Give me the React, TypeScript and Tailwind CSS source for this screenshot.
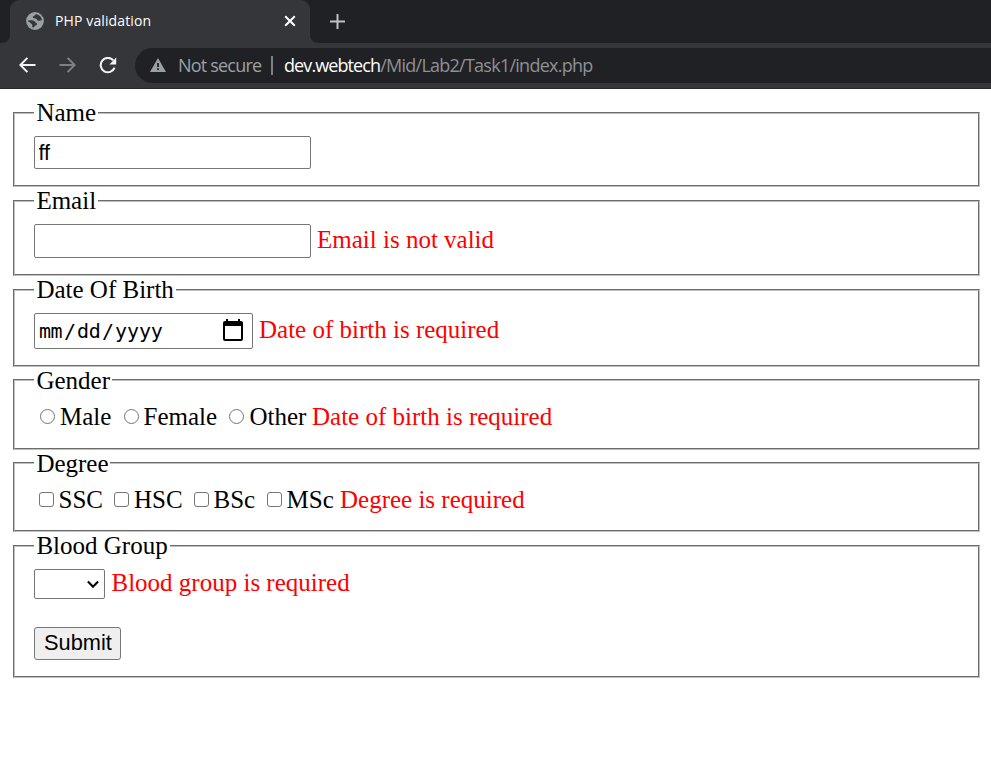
import type { ReactNode } from "react";

function TabStrip() {
  return (
    <div className="flex h-[43px] bg-[#35363a]">
      <div className="w-[10px] rounded-br-[8px] bg-[#202124]" />
      <div className="w-[300px] bg-[#202124]">
        <div className="flex h-[43px] items-center rounded-t-[9px] bg-[#35363a] pb-px pl-4 pr-[14px]">
          <svg width="18" height="18" viewBox="0 0 18 18" className="shrink-0">
            <circle cx="9" cy="9" r="8.9" fill="#9aa0a6" />
            <path
              d="M10.2 2.2C8.8 2.4 8.9 3.9 7.8 4.1C6.6 4.4 6.6 5.6 7.4 6.1C8.6 6.9 10.4 6.2 10.9 7.4C11.4 8.8 13.2 9.2 14.2 8.6L15.9 8.2C15.7 5.1 13.4 2.6 10.2 2.2Z"
              fill="#35363a"
            />
            <path
              d="M2.1 8.6C3.6 8.2 6.8 8 8.2 8.9C9.3 9.5 9.2 10.6 10.3 10.9C11.5 11.2 11.4 12.7 10.2 13C8.9 13.3 9 14.6 7.5 15.6L6.2 15.2L6.3 12.9C6.2 11.6 4.5 11.8 4.2 10.7C3.9 9.8 2.8 9.8 2.1 9.7Z"
              fill="#35363a"
            />
          </svg>
          <span className="ml-[11px] w-[97px] whitespace-nowrap font-['Open_Sans',sans-serif] text-[14px] leading-5 tracking-[0.12px] text-white">
            PHP validation
          </span>
          <svg width="12" height="12" viewBox="0 0 12 12" className="ml-auto" fill="none" stroke="#fff" strokeWidth="2">
            <path d="M1.2 1.2 10.8 10.8M10.8 1.2 1.2 10.8" />
          </svg>
        </div>
      </div>
      <div className="flex flex-1 items-center rounded-bl-[8px] bg-[#202124] pb-px pl-5">
        <svg width="15" height="15" viewBox="0 0 15 15" fill="none" stroke="#bdc1c6" strokeWidth="2">
          <path d="M7.5 0v15M0 7.5h15" />
        </svg>
      </div>
    </div>
  );
}

function Toolbar() {
  return (
    <div className="flex h-[46px] items-center border-b border-[#292a2d] bg-[#35363a] pb-px pl-[19px]">
      <svg width="17" height="16" viewBox="0 0 17 16" fill="none" stroke="#f1f3f4" strokeWidth="2">
        <path d="M16.5 8H1.6M8.4.9 1.4 8l7 7.1" />
      </svg>
      <svg width="17" height="16" viewBox="0 0 17 16" fill="none" stroke="#7f8083" strokeWidth="2" className="ml-[23px]">
        <path d="M.5 8h14.9M8.6.9l7 7.1-7 7.1" />
      </svg>
      <svg width="18" height="17" viewBox="0 0 18 17" fill="none" className="ml-[23px]">
        <path d="M14.2 3.2A7.2 7.2 0 1 0 15.6 10.7" stroke="#f1f3f4" strokeWidth="2.1" />
        <path d="M17.2.6V7.4H10.4Z" fill="#f1f3f4" />
      </svg>
      <div className="ml-[18px] flex h-[35px] flex-1 items-center rounded-l-full bg-[#202124] pl-[15px] font-['Open_Sans',sans-serif] text-[18px]">
        <svg width="16" height="14" viewBox="0 0 16 14">
          <path d="M8 0 16 14H0Z" fill="#9aa0a6" />
          <path d="M7.1 5h1.8v4H7.1zM7.1 10.3h1.8v1.8H7.1z" fill="#202124" />
        </svg>
        <span className="ml-3 w-[84px] whitespace-nowrap tracking-[-0.8px] text-[#9aa0a6]">Not secure</span>
        <span className="ml-[9px] h-[19px] w-[2px] bg-[#7d8084]" />
        <span className="ml-[11px] whitespace-nowrap text-[#8d9196]">
          <span className="tracking-[-0.9px] text-white">dev.webtech</span>
          <span className="tracking-[-0.75px]">/Mid/Lab2/Task1/index.php</span>
        </span>
      </div>
    </div>
  );
}

type GroupProps = { title: string; size: string; legend?: string; children: ReactNode };

function Group({ title, size, legend = "h-[28px] leading-[28px]", children }: GroupProps) {
  return (
    <fieldset className={`border-2 border-[#c0c0c0] [border-style:groove] pl-[19px] ${size}`}>
      <legend className={`whitespace-nowrap pl-[2.4px] pr-[1.9px] ${legend}`}>{title}</legend>
      {children}
    </fieldset>
  );
}

function ErrorText({ children }: { children: ReactNode }) {
  return <span className="ml-[6px] whitespace-nowrap text-[#ff0000]">{children}</span>;
}

const field = "rounded-[2px] border border-[#767676] bg-white";

export default function App() {
  return (
    <div className="min-h-[783px] w-[991px] overflow-hidden bg-white">
      <TabStrip />
      <Toolbar />
      <form className="ml-[13px] mt-[10px] w-[967px] font-['Liberation_Serif',serif] text-[25px] leading-[28px] text-black">
        <Group title="Name" size="h-[88px]">
          <div className="flex pt-[9px]">
            <input
              type="text"
              defaultValue="ff"
              className={`h-[33px] w-[277px] pl-[3.5px] pt-[2px] font-['Liberation_Sans',sans-serif] text-[21.5px] ${field}`}
            />
          </div>
        </Group>
        <Group title="Email" size="h-[89px]">
          <div className="flex pt-[9px]">
            <input type="text" className={`h-[34px] w-[277px] ${field}`} />
            <span className="pt-[2px]"><ErrorText>Email is not valid</ErrorText></span>
          </div>
        </Group>
        <Group title="Date Of Birth" size="h-[91px]">
          <div className="flex pt-[9px]">
            <div className={`flex h-[36px] w-[219px] items-center pl-[4px] pr-[9px] font-['DejaVu_Sans_Mono',monospace] text-[20px] ${field}`}>
              <span className="w-[25px] tracking-[-0.5px]">mm</span>
              <span className="w-[13px]">/</span>
              <span className="w-[25px] tracking-[-0.2px]">dd</span>
              <span className="w-[13px]">/</span>
              <span className="tracking-[-0.1px]">yyyy</span>
              <svg width="20" height="22" viewBox="0 0 20 22" className="mb-[2px] ml-auto">
                <path d="M3 0h2v2h10V0h2v2h1q2 0 2 2v16q0 2-2 2H2q-2 0-2-2V4q0-2 2-2h1zM2 7v13h16V7z" fill="#000" fillRule="evenodd" />
              </svg>
            </div>
            <span className="pt-[3px]"><ErrorText>Date of birth is required</ErrorText></span>
          </div>
        </Group>
        <Group title="Gender" size="h-[83px]" legend="h-[26px] leading-[28px]">
          <div className="flex items-center pl-[6px] pt-[10px]">
            <input type="radio" className="mb-[2px] h-[15px] w-[15px] appearance-none rounded-full border border-[#767676]" />
            <span className="ml-[5px] w-[64px]">Male</span>
            <input type="radio" className="mb-[2px] h-[15px] w-[15px] appearance-none rounded-full border border-[#767676]" />
            <span className="ml-[4.5px] w-[85.5px]">Female</span>
            <input type="radio" className="mb-[2px] h-[15px] w-[15px] appearance-none rounded-full border border-[#767676]" />
            <span className="ml-[5.5px] w-[56.5px]">Other</span>
            <ErrorText>Date of birth is required</ErrorText>
          </div>
        </Group>
        <Group title="Degree" size="h-[82px]" legend="h-[26px] leading-[28px]">
          <div className="flex items-center pl-[5px] pt-[10px]">
            <input type="checkbox" className="mb-[2px] h-[15px] w-[15px] appearance-none rounded-[3px] border border-[#767676]" />
            <span className="ml-[4.5px] w-[55.5px]">SSC</span>
            <input type="checkbox" className="mb-[2px] h-[15px] w-[15px] appearance-none rounded-[3px] border border-[#767676]" />
            <span className="ml-[5px] w-[60px]">HSC</span>
            <input type="checkbox" className="mb-[2px] h-[15px] w-[15px] appearance-none rounded-[3px] border border-[#767676]" />
            <span className="ml-[4.5px] w-[53.5px]">BSc</span>
            <input type="checkbox" className="mb-[2px] h-[15px] w-[15px] appearance-none rounded-[3px] border border-[#767676]" />
            <span className="ml-[4.5px] w-[47.5px]">MSc</span>
            <ErrorText>Degree is required</ErrorText>
          </div>
        </Group>
        <Group title="Blood Group" size="h-[146px]">
          <div className="flex pt-[9px]">
            <div className={`flex h-[30px] w-[71px] items-center justify-end pr-[5px] ${field}`}>
              <svg width="12" height="8" viewBox="0 0 12 8" fill="none" stroke="#000" strokeWidth="2.1">
                <path d="M.9 1.6 6 6.7 11.1 1.6" />
              </svg>
            </div>
            <span className="ml-[0.5px]"><ErrorText>Blood group is required</ErrorText></span>
          </div>
          <button
            type="button"
            className="mt-[28px] block h-[33px] w-[87px] rounded-[3px] border border-[#767676] bg-[#efefef] pb-[2px] pl-px font-['Liberation_Sans',sans-serif] text-[21.8px] leading-[29px]"
          >
            Submit
          </button>
        </Group>
      </form>
    </div>
  );
}
